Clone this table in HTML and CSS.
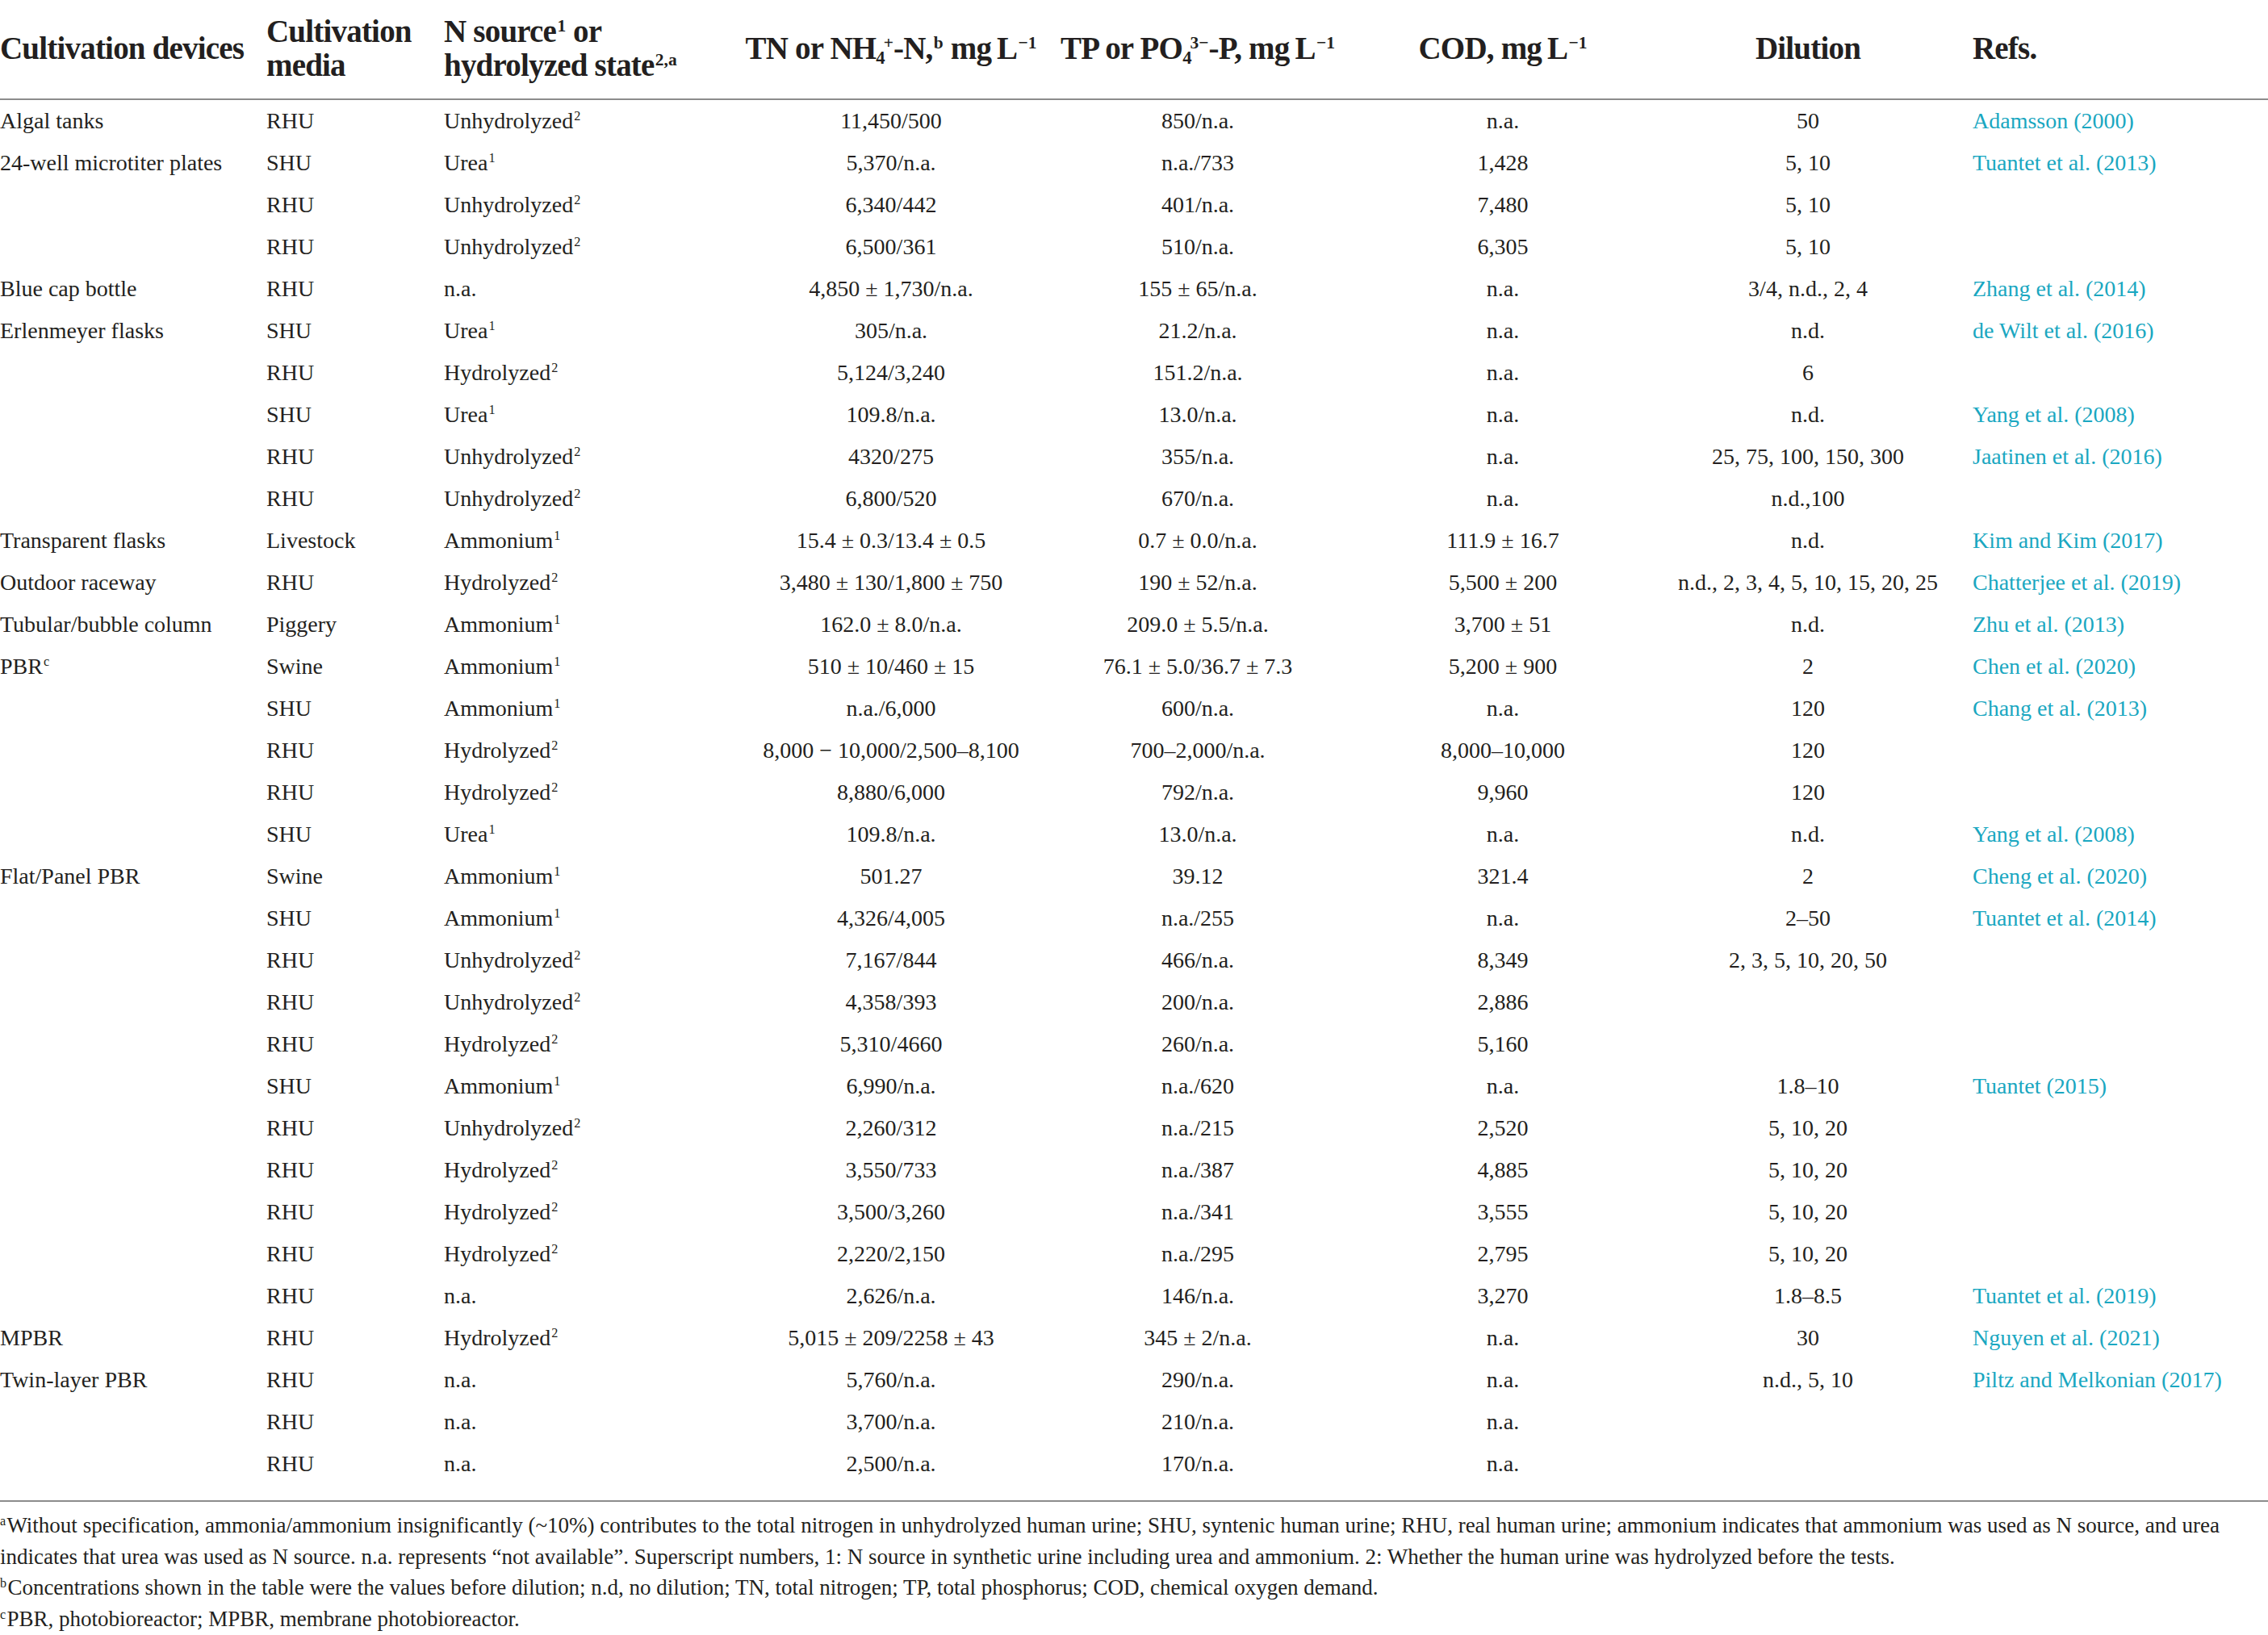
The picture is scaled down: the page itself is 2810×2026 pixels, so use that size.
FILE: index.html
```html
<!DOCTYPE html>
<html lang="en">
<head>
<meta charset="utf-8">
<title>Cultivation devices table</title>
<link rel="stylesheet" href="styles.css">
</head>
<body>
<div class="table-wrap">
<table class="data">
  <colgroup>
    <col class="c1"><col class="c2"><col class="c3"><col class="c4"><col class="c5"><col class="c6"><col class="c7"><col class="c8">
  </colgroup>
  <thead>
    <tr>
      <th class="l">Cultivation devices</th>
      <th class="l">Cultivation media</th>
      <th class="l">N source<sup>1</sup> or hydrolyzed state<sup>2,a</sup></th>
      <th class="c nw">TN or NH<sub>4</sub><sup class="ion">+</sup>-N,<sup>b</sup> mg&#8201;L<sup>&minus;1</sup></th>
      <th class="c nw">TP or PO<sub>4</sub><sup class="ion">3&minus;</sup>-P, mg&#8201;L<sup>&minus;1</sup></th>
      <th class="c nw">COD, mg&#8201;L<sup>&minus;1</sup></th>
      <th class="c nw">Dilution</th>
      <th class="r nw">Refs.</th>
    </tr>
  </thead>
  <tbody>
    <tr><td>Algal tanks</td><td>RHU</td><td>Unhydrolyzed<sup>2</sup></td><td class="c">11,450/500</td><td class="c">850/n.a.</td><td class="c">n.a.</td><td class="c">50</td><td class="r"><a>Adamsson (2000)</a></td></tr>
    <tr><td>24-well microtiter plates</td><td>SHU</td><td>Urea<sup>1</sup></td><td class="c">5,370/n.a.</td><td class="c">n.a./733</td><td class="c">1,428</td><td class="c">5, 10</td><td class="r"><a>Tuantet et al. (2013)</a></td></tr>
    <tr><td></td><td>RHU</td><td>Unhydrolyzed<sup>2</sup></td><td class="c">6,340/442</td><td class="c">401/n.a.</td><td class="c">7,480</td><td class="c">5, 10</td><td class="r"></td></tr>
    <tr><td></td><td>RHU</td><td>Unhydrolyzed<sup>2</sup></td><td class="c">6,500/361</td><td class="c">510/n.a.</td><td class="c">6,305</td><td class="c">5, 10</td><td class="r"></td></tr>
    <tr><td>Blue cap bottle</td><td>RHU</td><td>n.a.</td><td class="c">4,850 ± 1,730/n.a.</td><td class="c">155 ± 65/n.a.</td><td class="c">n.a.</td><td class="c">3/4, n.d., 2, 4</td><td class="r"><a>Zhang et al. (2014)</a></td></tr>
    <tr><td>Erlenmeyer flasks</td><td>SHU</td><td>Urea<sup>1</sup></td><td class="c">305/n.a.</td><td class="c">21.2/n.a.</td><td class="c">n.a.</td><td class="c">n.d.</td><td class="r"><a>de Wilt et al. (2016)</a></td></tr>
    <tr><td></td><td>RHU</td><td>Hydrolyzed<sup>2</sup></td><td class="c">5,124/3,240</td><td class="c">151.2/n.a.</td><td class="c">n.a.</td><td class="c">6</td><td class="r"></td></tr>
    <tr><td></td><td>SHU</td><td>Urea<sup>1</sup></td><td class="c">109.8/n.a.</td><td class="c">13.0/n.a.</td><td class="c">n.a.</td><td class="c">n.d.</td><td class="r"><a>Yang et al. (2008)</a></td></tr>
    <tr><td></td><td>RHU</td><td>Unhydrolyzed<sup>2</sup></td><td class="c">4320/275</td><td class="c">355/n.a.</td><td class="c">n.a.</td><td class="c">25, 75, 100, 150, 300</td><td class="r"><a>Jaatinen et al. (2016)</a></td></tr>
    <tr><td></td><td>RHU</td><td>Unhydrolyzed<sup>2</sup></td><td class="c">6,800/520</td><td class="c">670/n.a.</td><td class="c">n.a.</td><td class="c">n.d.,100</td><td class="r"></td></tr>
    <tr><td>Transparent flasks</td><td>Livestock</td><td>Ammonium<sup>1</sup></td><td class="c">15.4 ± 0.3/13.4 ± 0.5</td><td class="c">0.7 ± 0.0/n.a.</td><td class="c">111.9 ± 16.7</td><td class="c">n.d.</td><td class="r"><a>Kim and Kim (2017)</a></td></tr>
    <tr><td>Outdoor raceway</td><td>RHU</td><td>Hydrolyzed<sup>2</sup></td><td class="c">3,480 ± 130/1,800 ± 750</td><td class="c">190 ± 52/n.a.</td><td class="c">5,500 ± 200</td><td class="c">n.d., 2, 3, 4, 5, 10, 15, 20, 25</td><td class="r"><a>Chatterjee et al. (2019)</a></td></tr>
    <tr><td>Tubular/bubble column</td><td>Piggery</td><td>Ammonium<sup>1</sup></td><td class="c">162.0 ± 8.0/n.a.</td><td class="c">209.0 ± 5.5/n.a.</td><td class="c">3,700 ± 51</td><td class="c">n.d.</td><td class="r"><a>Zhu et al. (2013)</a></td></tr>
    <tr><td>PBR<sup>c</sup></td><td>Swine</td><td>Ammonium<sup>1</sup></td><td class="c">510 ± 10/460 ± 15</td><td class="c">76.1 ± 5.0/36.7 ± 7.3</td><td class="c">5,200 ± 900</td><td class="c">2</td><td class="r"><a>Chen et al. (2020)</a></td></tr>
    <tr><td></td><td>SHU</td><td>Ammonium<sup>1</sup></td><td class="c">n.a./6,000</td><td class="c">600/n.a.</td><td class="c">n.a.</td><td class="c">120</td><td class="r"><a>Chang et al. (2013)</a></td></tr>
    <tr><td></td><td>RHU</td><td>Hydrolyzed<sup>2</sup></td><td class="c">8,000 − 10,000/2,500–8,100</td><td class="c">700–2,000/n.a.</td><td class="c">8,000–10,000</td><td class="c">120</td><td class="r"></td></tr>
    <tr><td></td><td>RHU</td><td>Hydrolyzed<sup>2</sup></td><td class="c">8,880/6,000</td><td class="c">792/n.a.</td><td class="c">9,960</td><td class="c">120</td><td class="r"></td></tr>
    <tr><td></td><td>SHU</td><td>Urea<sup>1</sup></td><td class="c">109.8/n.a.</td><td class="c">13.0/n.a.</td><td class="c">n.a.</td><td class="c">n.d.</td><td class="r"><a>Yang et al. (2008)</a></td></tr>
    <tr><td>Flat/Panel PBR</td><td>Swine</td><td>Ammonium<sup>1</sup></td><td class="c">501.27</td><td class="c">39.12</td><td class="c">321.4</td><td class="c">2</td><td class="r"><a>Cheng et al. (2020)</a></td></tr>
    <tr><td></td><td>SHU</td><td>Ammonium<sup>1</sup></td><td class="c">4,326/4,005</td><td class="c">n.a./255</td><td class="c">n.a.</td><td class="c">2–50</td><td class="r"><a>Tuantet et al. (2014)</a></td></tr>
    <tr><td></td><td>RHU</td><td>Unhydrolyzed<sup>2</sup></td><td class="c">7,167/844</td><td class="c">466/n.a.</td><td class="c">8,349</td><td class="c">2, 3, 5, 10, 20, 50</td><td class="r"></td></tr>
    <tr><td></td><td>RHU</td><td>Unhydrolyzed<sup>2</sup></td><td class="c">4,358/393</td><td class="c">200/n.a.</td><td class="c">2,886</td><td class="c"></td><td class="r"></td></tr>
    <tr><td></td><td>RHU</td><td>Hydrolyzed<sup>2</sup></td><td class="c">5,310/4660</td><td class="c">260/n.a.</td><td class="c">5,160</td><td class="c"></td><td class="r"></td></tr>
    <tr><td></td><td>SHU</td><td>Ammonium<sup>1</sup></td><td class="c">6,990/n.a.</td><td class="c">n.a./620</td><td class="c">n.a.</td><td class="c">1.8–10</td><td class="r"><a>Tuantet (2015)</a></td></tr>
    <tr><td></td><td>RHU</td><td>Unhydrolyzed<sup>2</sup></td><td class="c">2,260/312</td><td class="c">n.a./215</td><td class="c">2,520</td><td class="c">5, 10, 20</td><td class="r"></td></tr>
    <tr><td></td><td>RHU</td><td>Hydrolyzed<sup>2</sup></td><td class="c">3,550/733</td><td class="c">n.a./387</td><td class="c">4,885</td><td class="c">5, 10, 20</td><td class="r"></td></tr>
    <tr><td></td><td>RHU</td><td>Hydrolyzed<sup>2</sup></td><td class="c">3,500/3,260</td><td class="c">n.a./341</td><td class="c">3,555</td><td class="c">5, 10, 20</td><td class="r"></td></tr>
    <tr><td></td><td>RHU</td><td>Hydrolyzed<sup>2</sup></td><td class="c">2,220/2,150</td><td class="c">n.a./295</td><td class="c">2,795</td><td class="c">5, 10, 20</td><td class="r"></td></tr>
    <tr><td></td><td>RHU</td><td>n.a.</td><td class="c">2,626/n.a.</td><td class="c">146/n.a.</td><td class="c">3,270</td><td class="c">1.8–8.5</td><td class="r"><a>Tuantet et al. (2019)</a></td></tr>
    <tr><td>MPBR</td><td>RHU</td><td>Hydrolyzed<sup>2</sup></td><td class="c">5,015 ± 209/2258 ± 43</td><td class="c">345 ± 2/n.a.</td><td class="c">n.a.</td><td class="c">30</td><td class="r"><a>Nguyen et al. (2021)</a></td></tr>
    <tr><td>Twin-layer PBR</td><td>RHU</td><td>n.a.</td><td class="c">5,760/n.a.</td><td class="c">290/n.a.</td><td class="c">n.a.</td><td class="c">n.d., 5, 10</td><td class="r"><a>Piltz and Melkonian (2017)</a></td></tr>
    <tr><td></td><td>RHU</td><td>n.a.</td><td class="c">3,700/n.a.</td><td class="c">210/n.a.</td><td class="c">n.a.</td><td class="c"></td><td class="r"></td></tr>
    <tr><td></td><td>RHU</td><td>n.a.</td><td class="c">2,500/n.a.</td><td class="c">170/n.a.</td><td class="c">n.a.</td><td class="c"></td><td class="r"></td></tr>
  </tbody>
</table>
</div>
<div class="notes">
  <p><sup>a</sup>Without specification, ammonia/ammonium insignificantly (~10%) contributes to the total nitrogen in unhydrolyzed human urine; SHU, syntenic human urine; RHU, real human urine; ammonium indicates that ammonium was used as N source, and urea indicates that urea was used as N source. n.a. represents “not available”. Superscript numbers, 1: N source in synthetic urine including urea and ammonium. 2: Whether the human urine was hydrolyzed before the tests.</p>
  <p><sup>b</sup>Concentrations shown in the table were the values before dilution; n.d, no dilution; TN, total nitrogen; TP, total phosphorus; COD, chemical oxygen demand.</p>
  <p><sup>c</sup>PBR, photobioreactor; MPBR, membrane photobioreactor.</p>
</div>
</body>
</html>
```

FILE: styles.css
```css
html, body {
  margin: 0;
  padding: 0;
  background: #ffffff;
}

body {
  width: 2810px;
  color: #231f20;
  font-family: "Liberation Serif", "Times New Roman", serif;
}

.table-wrap {
  padding-bottom: 19px;
  border-bottom: 2px solid #8c8c8c;
}

.data {
  width: 2810px;
  table-layout: fixed;
  border-collapse: separate;
  border-spacing: 0;
}

.c1 { width: 330px; }
.c2 { width: 220px; }
.c3 { width: 350px; }
.c4 { width: 408px; }
.c5 { width: 352px; }
.c6 { width: 404px; }
.c7 { width: 352px; }
.c8 { width: 394px; }

.data th {
  font-size: 39px;
  font-weight: bold;
  letter-spacing: -0.8px;
  line-height: 42px;
  padding: 18px 0 20px 0;
  vertical-align: middle;
  border-bottom: 2px solid #8c8c8c;
  color: #231f20;
}

.data td {
  font-size: 28px;
  line-height: 52px;
  height: 52px;
  padding: 0;
  vertical-align: middle;
  white-space: nowrap;
}

.l { text-align: left; }
.c { text-align: center; }
.r { text-align: left; padding-left: 28px !important; }
.nw { white-space: nowrap; }

sup, sub {
  line-height: 0;
  font-size: 0.58em;
}

sup { vertical-align: 0.62em; margin-left: 0.06em; }
sub { vertical-align: -0.28em; }

th sup { font-size: 0.55em; letter-spacing: 0; }

sup.ion { margin-left: -0.05em; }

.data a {
  color: #1aa7c1;
  text-decoration: none;
}

.notes {
  margin-top: 10px;
  font-size: 27px;
  line-height: 38.5px;
}

.notes p {
  margin: 0;
}

.notes sup {
  font-size: 0.6em;
  vertical-align: 0.55em;
  margin-left: 0;
  margin-right: 0.08em;
}
```
